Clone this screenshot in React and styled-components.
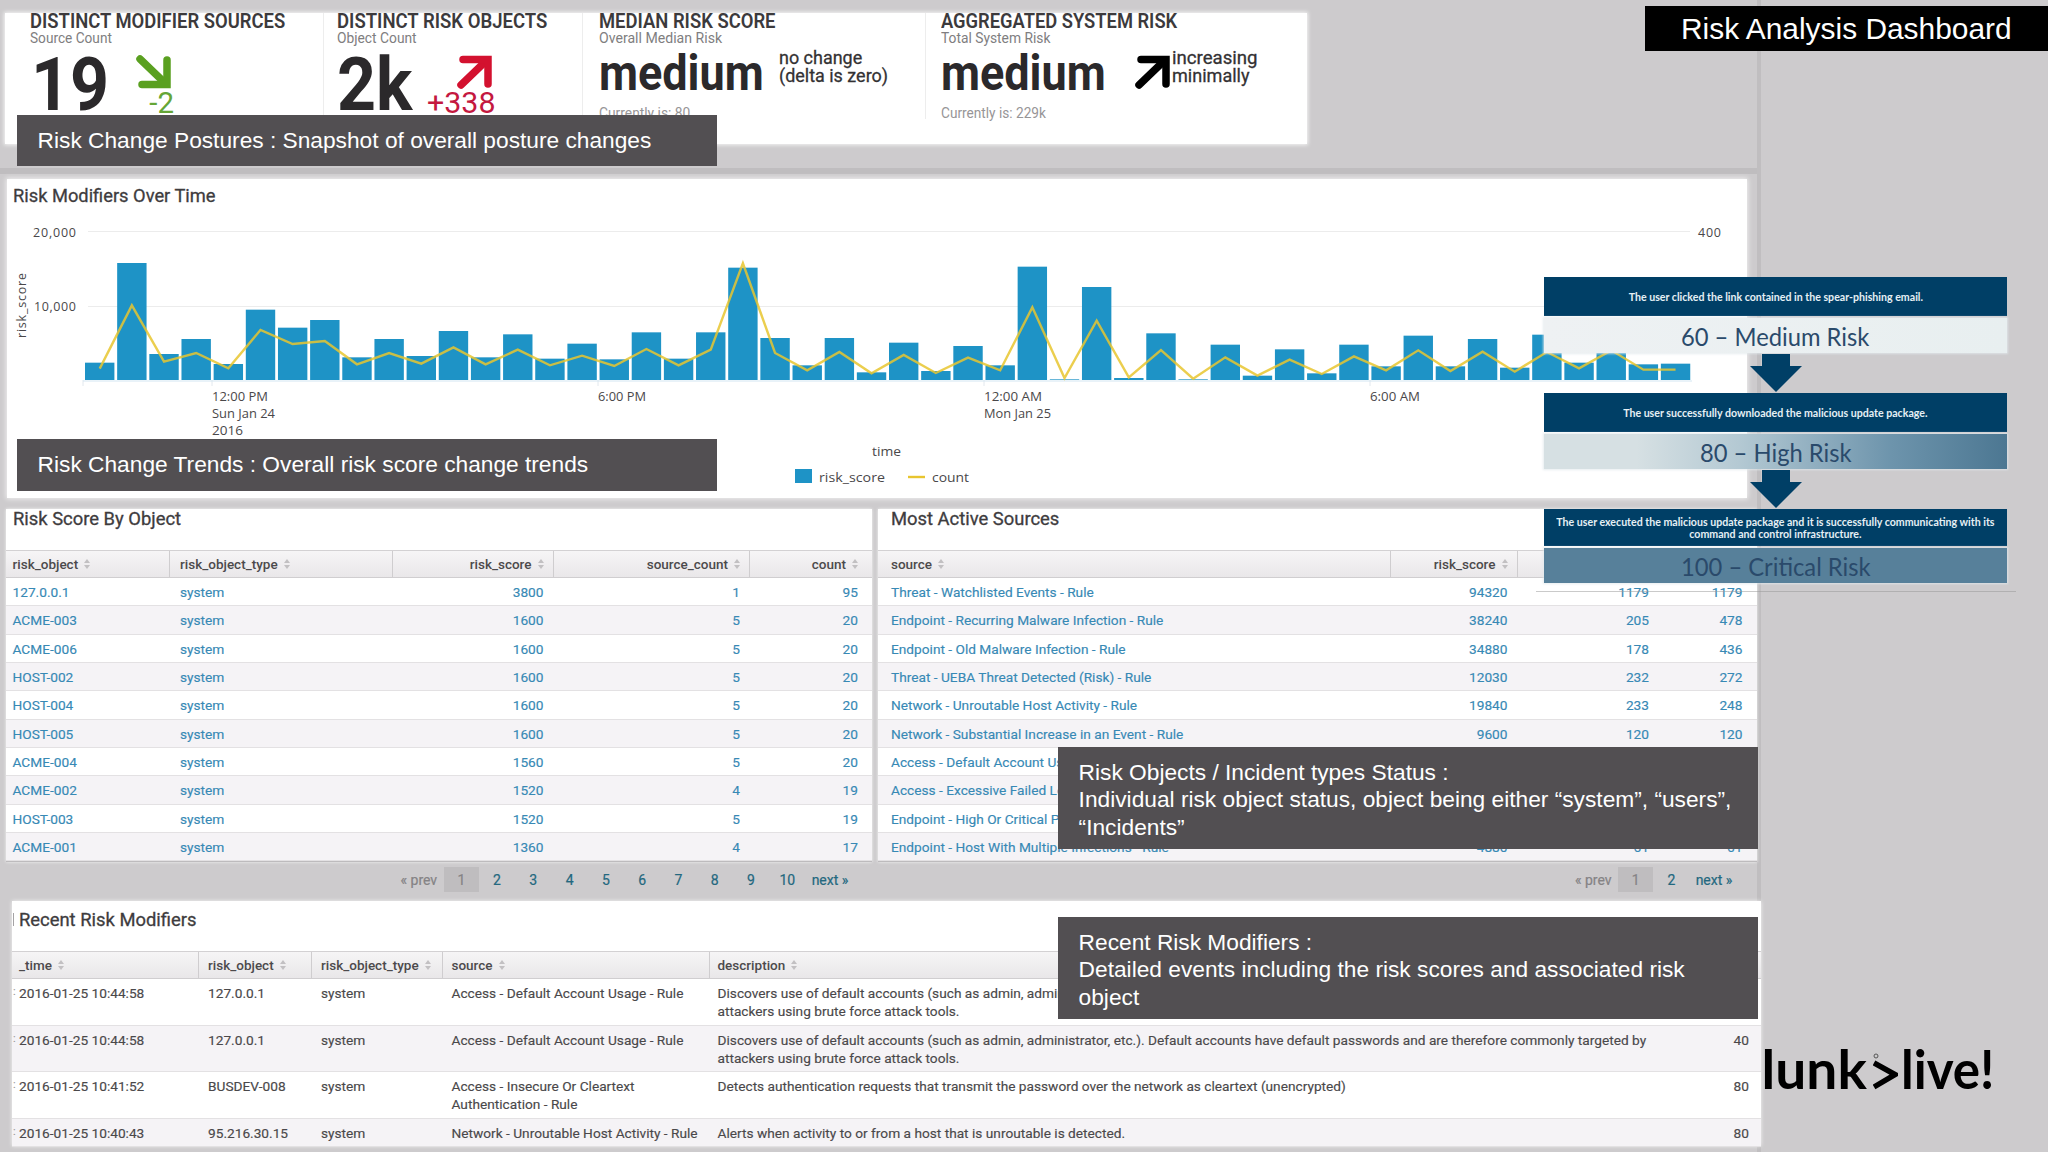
import React from 'react';
import styled, { createGlobalStyle } from 'styled-components';

const GlobalStyle = createGlobalStyle`
  * {
    box-sizing: border-box;
  }
  body {
    margin: 0;
    background: #cdcbcd;
    font-family: Roboto, sans-serif;
    color: #3a383a;
  }
`;

const Page = styled.div`
  position: relative;
  width: 2048px;
  height: 1152px;
  overflow: hidden;
  background: #cdcbcd;
`;

const Board = styled.div`
  width: 1761px;
  height: 1152px;
  display: flex;
  flex-direction: column;
  border-right: 4px solid #c0bec0;
`;

// text narrowed horizontally, anchored on its own edge
const Narrow = styled.span`
  display: inline-block;
  white-space: pre;
  transform: scaleX(${props => props.$x || 1});
  transform-origin: ${props => props.$from || 'left'} center;
`;

/* ---------- key figures ---------- */

const FigureStrip = styled.div`
  width: 1302px;
  height: 131px;
  margin: 13px 0 24px 5px;
  display: grid;
  grid-template-columns: 319px 259px 343px 381px;
  background: #fff;
  box-shadow: 0 0 4px 1px rgba(255, 255, 255, 0.8);
  flex: none;
`;

const Figure = styled.div`
  height: 106px;
  padding-left: ${props => props.$pad}px;
  border-right: 1px solid ${props => (props.$last ? 'transparent' : '#ededed')};
`;

const FigureName = styled.div`
  height: 17px;
  line-height: 17px;
  font-size: 19.5px;
  font-weight: 600;
  color: #3c3a3c;
`;

const FigureHint = styled.div`
  height: 16px;
  line-height: 16px;
  font-size: 15px;
  color: #807e80;
`;

const FigureBody = styled.div`
  display: flex;
  height: 73px;
  padding-left: ${props => props.$pad || 0}px;
`;

const BigNumber = styled.div`
  width: ${props => props.$w}px;
  font-size: 74px;
  font-weight: 700;
  line-height: 78px;
  color: #2b292b;
`;

const Delta = styled.div`
  display: flex;
  flex-direction: column;
  align-items: flex-end;
  width: ${props => props.$w}px;
  padding-top: 9px;
  color: ${props => props.$color};
  font-size: 29.5px;
  line-height: 28px;

  svg {
    margin-right: 2px;
  }
`;

const WordColumn = styled.div`
  width: ${props => props.$w}px;
`;

const BigWord = styled.div`
  height: 55px;
  line-height: 55px;
  font-size: 50px;
  font-weight: 700;
  color: #2b292b;
`;

const Current = styled.div`
  margin-top: 3px;
  font-size: 15px;
  line-height: 18px;
  color: #979597;
`;

const Change = styled.div`
  padding-top: 3px;
  font-size: 19px;
  line-height: 18px;
  color: #333133;
  -webkit-text-stroke: 0.3px;
`;

const ArrowBox = styled.div`
  width: 37px;
  padding-top: 9px;
`;

function TrendArrow({ color, down }) {
  return (
    <svg width="36" height="34" viewBox="0 0 36 34">
      <g
        fill="none"
        stroke={color}
        strokeWidth="7.5"
        strokeLinecap="round"
        transform={down ? 'translate(0 34) scale(1 -1)' : undefined}
      >
        <path d="M4 30 L30 5" />
        <path d="M6 4.5 H31 V29" />
      </g>
    </svg>
  );
}

/* ---------- chart ---------- */

const ChartZone = styled.div`
  height: 330px;
  padding: 5px 0 0 7px;
  border-top: 6px solid #bfbdbf;
  flex: none;
`;

const ChartPanel = styled.div`
  width: 1740px;
  height: 319px;
  background: #fff;
  box-shadow: 0 0 5px 1px rgba(255, 255, 255, 0.7);
`;

const ChartTitle = styled.div`
  height: 33px;
  padding: 5px 0 0 6px;
  font-size: 18.3px;
  line-height: 24px;
  color: #3e3c3e;
  -webkit-text-stroke: 0.3px;
`;

const Plot = styled.svg`
  display: block;
  font-family: 'Open Sans', sans-serif;
  font-size: 12.5px;
  fill: #4a484a;
`;

const FULL = 444;
const SCORES = [
  52, 351, 78, 123, 48, 211, 157, 180, 68, 123, 72, 147, 68, 137, 64, 109, 62, 143, 64, 143, 337, 126, 44, 126, 23,
  112, 27, 102, 44, 340, 2, 279, 6, 140, 2, 106, 13, 92, 20, 106, 41, 133, 41, 123, 37, 136, 52, 123, 47, 49
];
const COUNTS = [
  34, 224, 55, 81, 35, 150, 108, 117, 47, 81, 49, 98, 47, 91, 44, 73, 42, 93, 44, 91, 350, 81, 29, 84, 20, 75, 21, 67,
  29, 218, 6, 178, 8, 90, 4, 68, 13, 61, 18, 71, 29, 89, 27, 85, 25, 84, 35, 89, 31, 31
];
const TICKS = [
  [212, 401, '12:00 PM', 56],
  [212, 418, 'Sun Jan 24', 63],
  [212, 435, '2016', 31],
  [598, 401, '6:00 PM', 48],
  [984, 401, '12:00 AM', 58],
  [984, 418, 'Mon Jan 25', 67],
  [1370, 401, '6:00 AM', 50]
];
const PLOT_BOTTOM = 380;
const toY = v => PLOT_BOTTOM - (v * 148) / FULL;

function RiskChart() {
  const line = COUNTS.map((v, i) => `${99.7 + i * 32.16},${toY(v)}`).join(' ');
  return (
    <Plot width="1740" height="286" viewBox="7 212 1740 286">
      <path d="M88 231.5 H1690 M88 306.5 H1690" stroke="#ececec" />
      {[83, 212, 598, 984, 1370].map(x => (
        <path key={x} d={`M${x} 380 V386`} stroke="#e2e8ee" />
      ))}
      <path d="M83 381 H1692" stroke="#d3e6f2" />
      {SCORES.map((v, i) => (
        <rect key={i} x={85 + i * 32.16} y={toY(v)} width="29.4" height={(v * 148) / FULL} fill="#1e93c6" />
      ))}
      <polyline points={line} fill="none" stroke="#e8c52f" strokeOpacity="0.85" strokeWidth="2.4" />
      <text x="33" y="236.5" textLength="43">20,000</text>
      <text x="34" y="310.5" textLength="42">10,000</text>
      <text x="1698" y="236.5" textLength="23">400</text>
      <text transform="translate(26 338) rotate(-90)" textLength="65">risk_score</text>
      {TICKS.map(([x, y, label, w]) => (
        <text key={x + label} x={x} y={y} textLength={w} lengthAdjust="spacingAndGlyphs">{label}</text>
      ))}
      <text x="872" y="456" textLength="29" lengthAdjust="spacingAndGlyphs">time</text>
      <rect x="795" y="469" width="17" height="14" fill="#1e93c6" />
      <text x="819" y="481.5" textLength="66" lengthAdjust="spacingAndGlyphs">risk_score</text>
      <path d="M908 477 H925" stroke="#e8c52f" strokeWidth="2.4" />
      <text x="932" y="481.5" textLength="37" lengthAdjust="spacingAndGlyphs">count</text>
    </Plot>
  );
}

/* ---------- tables ---------- */

const TablePair = styled.div`
  height: 391px;
  margin-top: 11px;
  display: grid;
  grid-template-columns: 866px 879px;
  column-gap: 6px;
  padding-left: 6px;
  flex: none;
`;

const TablePanel = styled.div`
  display: flex;
  flex-direction: column;
`;

const TableCard = styled.div`
  background: #fff;
  height: 353px;
  box-shadow: 0 0 3px rgba(255, 255, 255, 0.8);
  border-bottom: 1px solid #bdbbbd;
`;

const TableTitle = styled.div`
  height: ${props => props.$h || 40.5}px;
  padding: ${props => props.$pad || '0 0 0 7px'};
  font-size: 18.4px;
  line-height: 20px;
  color: #3e3c3e;
  -webkit-text-stroke: 0.3px;
`;

const HeadRow = styled.div`
  display: grid;
  grid-template-columns: ${props => props.$cols};
  height: 28.5px;
  background: linear-gradient(#f6f5f6, #e9e7e9);
  border-top: 1px solid #d3d1d3;
  border-bottom: 1px solid #d0ced0;
`;

const HeadCell = styled.div`
  display: flex;
  align-items: center;
  justify-content: ${props => (props.$right ? 'flex-end' : 'flex-start')};
  gap: 6px;
  padding: 0 ${props => (props.$right ? props.$edge : 0)}px 0 ${props => props.$pad || 0}px;
  border-right: 1px solid ${props => (props.$last ? 'transparent' : '#cfcdcf')};
  font-size: 13.5px;
  font-weight: 500;
  color: #4c4a4c;
`;

const Row = styled.div`
  position: relative;
  display: grid;
  grid-template-columns: ${props => props.$cols};
  height: ${props => props.$h || 28.35}px;
  padding-top: ${props => props.$top || 0}px;
  line-height: ${props => props.$line || 28.5}px;
  background: ${props => (props.$odd ? '#f5f3f6' : '#fff')};
  box-shadow: inset 0 -1px #e3e1e3;
  font-size: 13.7px;
  color: ${props => props.$color || '#3789b5'};
  -webkit-text-stroke: 0.15px;
`;

const Cell = styled.div`
  text-align: ${props => (props.$right ? 'right' : 'left')};
  padding: 0 ${props => (props.$right ? props.$edge : 0)}px 0 ${props => props.$pad || 0}px;
  white-space: pre;
`;

function SortMark() {
  return (
    <svg width="6" height="10" viewBox="0 0 6 10" fill="#c2c0c2">
      <path d="M0 4 L3 0 L6 4 Z M0 6 L3 10 L6 6 Z" />
    </svg>
  );
}

function Head({ cols, defs }) {
  return (
    <HeadRow $cols={cols}>
      {defs.map((d, i) => (
        <HeadCell key={i} $right={d.right} $edge={(d.edge || 0) - 1} $pad={d.pad} $last={i === defs.length - 1}>
          {d.name}
          {d.name && <SortMark />}
        </HeadCell>
      ))}
    </HeadRow>
  );
}

const OBJECT_COLS = '164px 223px 161px 196px 122px';
const OBJECT_DEFS = [
  { name: 'risk_object', pad: 6.5 },
  { name: 'risk_object_type', pad: 10 },
  { name: 'risk_score', right: true, edge: 10.5 },
  { name: 'source_count', right: true, edge: 10 },
  { name: 'count', right: true, edge: 14 }
];
const OBJECTS = [
  ['127.0.0.1', 'system', '3800', '1', '95'],
  ['ACME-003', 'system', '1600', '5', '20'],
  ['ACME-006', 'system', '1600', '5', '20'],
  ['HOST-002', 'system', '1600', '5', '20'],
  ['HOST-004', 'system', '1600', '5', '20'],
  ['HOST-005', 'system', '1600', '5', '20'],
  ['ACME-004', 'system', '1560', '5', '20'],
  ['ACME-002', 'system', '1520', '4', '19'],
  ['HOST-003', 'system', '1520', '5', '19'],
  ['ACME-001', 'system', '1360', '4', '17']
];

const SOURCE_COLS = '513px 127px 142px 97px';
const SOURCE_DEFS = [
  { name: 'source', pad: 13 },
  { name: 'risk_score', right: true, edge: 10.5 },
  { name: '', right: true, edge: 11 },
  { name: '', right: true, edge: 14.5 }
];
const SOURCES = [
  ['Threat - Watchlisted Events - Rule', '94320', '1179', '1179'],
  ['Endpoint - Recurring Malware Infection - Rule', '38240', '205', '478'],
  ['Endpoint - Old Malware Infection - Rule', '34880', '178', '436'],
  ['Threat - UEBA Threat Detected (Risk) - Rule', '12030', '232', '272'],
  ['Network - Unroutable Host Activity - Rule', '19840', '233', '248'],
  ['Network - Substantial Increase in an Event - Rule', '9600', '120', '120'],
  ['Access - Default Account Usage - Rule', '', '', ''],
  ['Access - Excessive Failed Logins - Rule', '', '', ''],
  ['Endpoint - High Or Critical Priority Host - Rule', '', '', ''],
  ['Endpoint - Host With Multiple Infections - Rule', '4880', '61', '61']
];

function DataTable({ cols, defs, rows }) {
  return (
    <>
      <Head cols={cols} defs={defs} />
      {rows.map((row, r) => (
        <Row key={r} $cols={cols} $odd={r % 2 === 1}>
          {row.map((value, i) => (
            <Cell key={i} $right={defs[i].right} $edge={defs[i].edge} $pad={defs[i].pad}>
              {value}
            </Cell>
          ))}
        </Row>
      ))}
    </>
  );
}

const Pager = styled.div`
  display: flex;
  justify-content: flex-end;
  align-items: center;
  height: 35px;
  padding-right: ${props => props.$edge}px;
  font-size: 14px;
  -webkit-text-stroke: 0.2px;
`;

const PageItem = styled.span`
  width: ${props => props.$w || 36.3}px;
  text-align: center;
  color: ${props => (props.$off ? '#858385' : '#23687f')};
`;

const PageCurrent = styled(PageItem)`
  width: 35px;
  height: 25px;
  line-height: 26px;
  background: #bfbdbf;
  color: #858385;
`;

function Pages({ edge, last }) {
  const pages = Array.from({ length: last - 1 }, (_, i) => i + 2);
  return (
    <Pager $edge={edge}>
      <PageItem $w={50} $off>« prev</PageItem>
      <PageCurrent>1</PageCurrent>
      {pages.map(p => (
        <PageItem key={p}>{p}</PageItem>
      ))}
      <PageItem $w={49}>next »</PageItem>
    </Pager>
  );
}

const RecentPanel = styled.div`
  width: 1749px;
  height: 245px;
  margin-left: 12px;
  margin-top: 1px;
  background: #fff;
  box-shadow: 0 0 4px rgba(255, 255, 255, 0.8);
  flex: none;
`;

const RecentRow = styled(Row)`
  &::before {
    content: ':';
    position: absolute;
    left: 1px;
    top: 4px;
    font-size: 11px;
    color: #9a989a;
  }
`;

const TitleEdge = styled.span`
  display: inline-block;
  width: 1px;
  height: 13px;
  margin: 0 5px 0 -6px;
  background: #a5a3a5;
`;

const RECENT_COLS = '187px 113px 131px 267px 1fr 80px';
const RECENT_DEFS = [
  { name: '_time', pad: 7 },
  { name: 'risk_object', pad: 9 },
  { name: 'risk_object_type', pad: 9 },
  { name: 'source', pad: 8.5 },
  { name: 'description', pad: 7.5 },
  { name: '' }
];
const BRUTE =
  'Discovers use of default accounts (such as admin, administrator, etc.). Default accounts have default passwords and are therefore commonly targeted by\nattackers using brute force attack tools.';
const RECENT = [
  ['2016-01-25 10:44:58', '127.0.0.1', 'system', 'Access - Default Account Usage - Rule', BRUTE, ''],
  ['2016-01-25 10:44:58', '127.0.0.1', 'system', 'Access - Default Account Usage - Rule', BRUTE, '40'],
  [
    '2016-01-25 10:41:52',
    'BUSDEV-008',
    'system',
    'Access - Insecure Or Cleartext\nAuthentication - Rule',
    'Detects authentication requests that transmit the password over the network as cleartext (unencrypted)',
    '80'
  ],
  [
    '2016-01-25 10:40:43',
    '95.216.30.15',
    'system',
    'Network - Unroutable Host Activity - Rule',
    'Alerts when activity to or from a host that is unroutable is detected.',
    '80'
  ]
];

/* ---------- overlays ---------- */

const Note = styled.div`
  position: absolute;
  left: ${props => props.$left}px;
  top: ${props => props.$top}px;
  width: 700px;
  height: ${props => props.$h}px;
  padding: 11.5px 20px 0 20.6px;
  background: #524f52;
  color: #fff;
  font-family: 'Liberation Sans', Arial, sans-serif;
  font-size: 22.72px;
  line-height: 27.6px;
  white-space: pre;
`;

const PageTitle = styled.div`
  position: absolute;
  left: 1645px;
  top: 6px;
  width: 403px;
  height: 45px;
  padding-left: 36px;
  background: #000;
  color: #fff;
  font-family: 'Liberation Sans', Arial, sans-serif;
  font-size: 29.9px;
  line-height: 46px;
  white-space: nowrap;
`;

const RiskFlow = styled.div`
  position: absolute;
  left: 1544px;
  top: 277px;
  width: 463px;
  display: flex;
  flex-direction: column;
  align-items: center;
  font-family: Lato, sans-serif;
`;

const StepText = styled.div`
  width: 100%;
  height: ${props => props.$h || 39}px;
  display: flex;
  align-items: center;
  justify-content: center;
  text-align: center;
  background: #003f66;
  color: #e6f0f5;
  font-size: 11.6px;
  font-weight: 700;
  line-height: 12px;
`;

const StepScore = styled.div`
  width: 100%;
  height: 35px;
  margin-top: 2px;
  display: flex;
  align-items: center;
  justify-content: center;
  background: ${props => props.$bg};
  color: #2a4a6b;
  font-size: 25px;
  line-height: 30px;
  box-shadow: 0 0 2px 1px rgba(225, 232, 236, 0.8);
`;

const StepArrow = styled.svg`
  display: block;
  margin: 1px 0;
`;

const Rule = styled.div`
  width: 480px;
  height: 1px;
  margin-top: 8px;
  background: rgba(150, 150, 150, 0.5);
  flex: none;
`;

const STEPS = [
  {
    text: 'The user clicked the link contained in the spear-phishing email.',
    score: '60 – Medium Risk',
    bg: 'linear-gradient(90deg, #eef1f3, #e8eff0)'
  },
  {
    text: 'The user successfully downloaded the malicious update package.',
    score: '80 – High Risk',
    bg: 'linear-gradient(90deg, #d6e0e3 20%, #b4c9d3 42%, #6d94ac 75%, #4c7792)'
  },
  {
    text:
      'The user executed the malicious update package and it is successfully communicating with its\ncommand and control infrastructure.',
    score: '100 – Critical Risk',
    bg: '#57809a'
  }
];

const Logo = styled.div`
  position: absolute;
  left: 1761px;
  top: 1031px;
  height: 76px;
  display: flex;
  font-family: Lato, sans-serif;
  font-size: 54px;
  font-weight: 700;
  line-height: 76px;
  color: #000;
`;

const LogoWord = styled.div`
  display: flex;
  justify-content: flex-end;
  width: ${props => props.$w}px;
  overflow: hidden;
`;

const Chevron = styled.svg`
  margin: 22px 3px 0 6px;
`;

function App() {
  return (
    <Page>
      <GlobalStyle />
      <Board>
        <FigureStrip>
          <Figure $pad={25}>
            <FigureName><Narrow $x={0.945}>DISTINCT MODIFIER SOURCES</Narrow></FigureName>
            <FigureHint><Narrow $x={0.91}>Source Count</Narrow></FigureHint>
            <FigureBody $pad={1}>
              <BigNumber $w={84}><Narrow $x={0.92}>19</Narrow></BigNumber>
              <Delta $w={59} $color="#65a637">
                <TrendArrow color="#5aa020" down />
                <Narrow $x={1} $from="right">-2</Narrow>
              </Delta>
            </FigureBody>
          </Figure>
          <Figure $pad={13}>
            <FigureName><Narrow $x={0.95}>DISTINCT RISK OBJECTS</Narrow></FigureName>
            <FigureHint><Narrow $x={0.92}>Object Count</Narrow></FigureHint>
            <FigureBody>
              <BigNumber $w={84}><Narrow $x={0.92}>2k</Narrow></BigNumber>
              <Delta $w={74} $color="#c4183f">
                <TrendArrow color="#d3112f" />
                <Narrow $x={1.03} $from="right">+338</Narrow>
              </Delta>
            </FigureBody>
          </Figure>
          <Figure $pad={16}>
            <FigureName><Narrow $x={0.945}>MEDIAN RISK SCORE</Narrow></FigureName>
            <FigureHint><Narrow $x={0.94}>Overall Median Risk</Narrow></FigureHint>
            <FigureBody>
              <WordColumn $w={180}>
                <BigWord><Narrow $x={0.9}>medium</Narrow></BigWord>
                <Current><Narrow $x={0.92}>Currently is: 80</Narrow></Current>
              </WordColumn>
              <Change>
                <Narrow $x={0.945}>no change</Narrow>
                <br />
                <Narrow $x={0.945}>(delta is zero)</Narrow>
              </Change>
            </FigureBody>
          </Figure>
          <Figure $pad={15} $last>
            <FigureName><Narrow $x={0.94}>AGGREGATED SYSTEM RISK</Narrow></FigureName>
            <FigureHint><Narrow $x={0.92}>Total System Risk</Narrow></FigureHint>
            <FigureBody>
              <WordColumn $w={194}>
                <BigWord><Narrow $x={0.9}>medium</Narrow></BigWord>
                <Current><Narrow $x={0.91}>Currently is: 229k</Narrow></Current>
              </WordColumn>
              <ArrowBox><TrendArrow color="#000" /></ArrowBox>
              <Change>
                <Narrow $x={0.98}>increasing</Narrow>
                <br />
                <Narrow $x={0.95}>minimally</Narrow>
              </Change>
            </FigureBody>
          </Figure>
        </FigureStrip>

        <ChartZone>
          <ChartPanel>
            <ChartTitle>Risk Modifiers Over Time</ChartTitle>
            <RiskChart />
          </ChartPanel>
        </ChartZone>

        <TablePair>
          <TablePanel>
            <TableCard>
              <TableTitle>Risk Score By Object</TableTitle>
              <DataTable cols={OBJECT_COLS} defs={OBJECT_DEFS} rows={OBJECTS} />
            </TableCard>
            <Pages edge={17.5} last={10} />
          </TablePanel>
          <TablePanel>
            <TableCard>
              <TableTitle $pad="0 0 0 13px">Most Active Sources</TableTitle>
              <DataTable cols={SOURCE_COLS} defs={SOURCE_DEFS} rows={SOURCES} />
            </TableCard>
            <Pages edge={18.5} last={2} />
          </TablePanel>
        </TablePair>

        <RecentPanel>
          <TableTitle $h={49.5} $pad="9px 0 0 7px">
            <TitleEdge />
            Recent Risk Modifiers
          </TableTitle>
          <Head cols={RECENT_COLS} defs={RECENT_DEFS} />
          {RECENT.map((row, r) => (
            <RecentRow
              key={r}
              $cols={RECENT_COLS}
              $h={r === 3 ? 28 : 46.5}
              $top={5}
              $line={18.3}
              $odd={r % 2 === 1}
              $color="#4a484a"
            >
              {row.map((value, i) => (
                <Cell key={i} $right={i === 5} $edge={12} $pad={RECENT_DEFS[i].pad}>
                  {value}
                </Cell>
              ))}
            </RecentRow>
          ))}
        </RecentPanel>
      </Board>

      <Logo>
        <LogoWord $w={106}>
          <Narrow $x={1.02} $from="right">plunk</Narrow>
        </LogoWord>
        <Chevron width="25" height="40" viewBox="0 0 25 40">
          <path d="M1 10 L22 21.5 L1 34" fill="none" stroke="#000" strokeWidth="5.5" />
          <circle cx="3" cy="3" r="2" fill="none" stroke="#555" />
        </Chevron>
        <Narrow $x={0.945}>live!</Narrow>
      </Logo>

      <Note $left={17} $top={115} $h={51}>Risk Change Postures : Snapshot of overall posture changes</Note>
      <Note $left={17} $top={439} $h={52}>Risk Change Trends : Overall risk score change trends</Note>
      <Note $left={1058} $top={747} $h={102}>
        {'Risk Objects / Incident types Status :\nIndividual risk object status, object being either “system”, “users”,\n“Incidents”'}
      </Note>
      <Note $left={1058} $top={917} $h={102}>
        {'Recent Risk Modifiers :\nDetailed events including the risk scores and associated risk\nobject'}
      </Note>

      <RiskFlow>
        {STEPS.map((step, i) => (
          <React.Fragment key={i}>
            <StepText $h={i === 2 ? 37 : 39}>
              <Narrow $x={0.915} $from="center">{step.text}</Narrow>
            </StepText>
            <StepScore $bg={step.bg}>
              <Narrow $x={0.95} $from="center">{step.score}</Narrow>
            </StepScore>
            {i < 2 && (
              <StepArrow width="52" height="38" viewBox="0 0 52 38">
                <path d="M12 0 H40 V12 H52 L26 38 L0 12 H12 Z" fill="#003f66" />
              </StepArrow>
            )}
          </React.Fragment>
        ))}
        <Rule />
      </RiskFlow>

      <PageTitle>Risk Analysis Dashboard</PageTitle>
    </Page>
  );
}

export default App;
